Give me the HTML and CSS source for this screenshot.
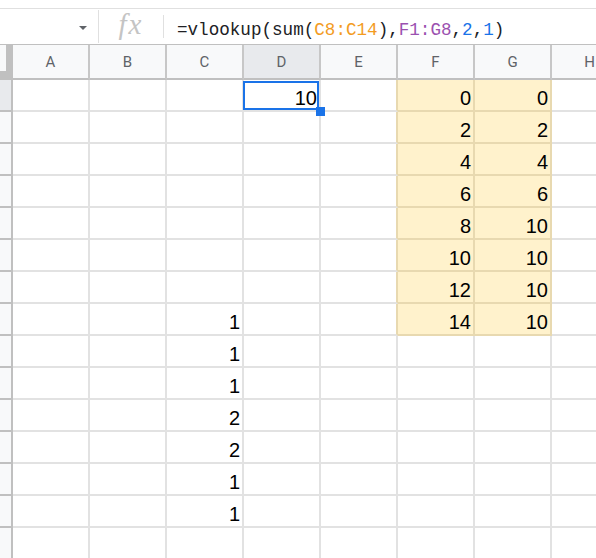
FILE: index.html
```html
<!DOCTYPE html>
<html lang="en">
  <head>
    <meta charset="UTF-8" />
    <meta name="viewport" content="width=device-width, initial-scale=1.0" />
    <title>Sheet</title>
    <link rel="stylesheet" href="styles.css">
  </head>
  <body>
    <div class="formula-bar">
      <div class="name-box"><span class="arrow"></span></div>
      <div class="sep"></div>
      <div class="fx">fx</div>
      <div class="sep short"></div>
      <div class="formula">=vlookup(sum(<span class="ref-a">C8:C14</span>),<span class="ref-b">F1:G8</span>,<span class="num">2</span>,<span class="num">1</span>)</div>
    </div>
    <div class="sheet" id="sheet"></div>
    <script>
      const cols = ["A", "B", "C", "D", "E", "F", "G", "H"];
      const data = { D1: 10, C8: 1, C9: 1, C10: 1, C11: 2, C12: 2, C13: 1, C14: 1 };
      const f = [0, 2, 4, 6, 8, 10, 12, 14];
      const g = [0, 2, 4, 6, 10, 10, 10, 10];
      f.forEach((v, i) => {
        data["F" + (i + 1)] = v;
        data["G" + (i + 1)] = g[i];
      });

      let html = `<div class="corner"></div>`;
      html += cols
        .map((c) => `<div class="col-head ${c == "D" ? "active" : ""}">${c}</div>`)
        .join("");
      for (let r = 1; r <= 15; r++) {
        html += `<div class="row-head ${r == 1 ? "active" : ""}"></div>`;
        html += cols
          .map((c) => {
            let cls = "cell";
            if (r <= 8 && (c == "F" || c == "G")) cls += " fill";
            if (r <= 8 && c == "E") cls += " edge";
            if (c == "D" && r == 1) cls += " selected";
            const v = data[c + r];
            return `<div class="${cls}">${v === undefined ? "" : v}</div>`;
          })
          .join("");
      }
      document.querySelector("#sheet").innerHTML = html;
    </script>
  </body>
</html>
```

FILE: styles.css
```css
* {
  box-sizing: border-box;
}
body {
  margin: 0;
  overflow: hidden;
  background: #fff;
  font-family: "Liberation Sans", Arial, sans-serif;
}
.formula-bar {
  margin-top: 8px;
  height: 36px;
  border-top: 1px solid #e0e0e0;
  display: flex;
  align-items: center;
}
.name-box {
  width: 98px;
  height: 100%;
  display: flex;
  align-items: center;
  justify-content: flex-end;
  padding-right: 11px;
}
.arrow {
  border-left: 4px solid transparent;
  border-right: 4px solid transparent;
  border-top: 4px solid #5f6368;
  margin-top: 2px;
}
.sep {
  width: 1px;
  height: 33px;
  background: #e0e0e0;
}
.sep.short {
  height: 23px;
}
.fx {
  width: 64px;
  text-align: center;
  font: italic 29px/28px "Liberation Serif", serif;
  color: #c4c4c4;
  letter-spacing: 2px;
  margin-bottom: 6px;
}
.formula {
  padding-left: 13px;
  margin-top: 6px;
  font: 17.6px/20px "Liberation Mono", monospace;
  color: #202124;
  white-space: nowrap;
}
.ref-a {
  color: #f39c1f;
}
.ref-b {
  color: #9b51b0;
}
.num {
  color: #1a73e8;
}
.sheet {
  display: grid;
  grid-template-columns: 13px repeat(8, 77px);
  grid-template-rows: 35px;
  grid-auto-rows: 32px;
  border-top: 1px solid #c0c0c0;
  overflow: hidden;
}
.corner {
  background: #f8f9fa;
  border-right: 7px solid #c0c0c0;
  border-bottom: 9px solid #c0c0c0;
}
.col-head {
  background: #f8f9fa;
  border-right: 2px solid #c7c7c7;
  border-bottom: 2px solid #c0c0c0;
  display: flex;
  align-items: center;
  justify-content: center;
  font: 15px Roboto, sans-serif;
  color: #5f6368;
}
.row-head {
  background: #f8f9fa;
  border-right: 2px solid #c0c0c0;
  border-bottom: 2px solid #c0c0c0;
}
.active {
  background: #e8eaed;
}
.cell {
  border-right: 2px solid #e2e2e2;
  border-bottom: 2px solid #e2e2e2;
  display: flex;
  justify-content: flex-end;
  align-items: flex-end;
  padding: 0 2px 2px 0;
  font-size: 20px;
  line-height: 20px;
  color: #000;
}
.fill {
  background: #fff2cc;
  border-color: #e8d9b0;
}
.edge {
  border-right-color: #e8d9b0;
}
.selected {
  position: relative;
}
.selected::before {
  content: "";
  position: absolute;
  left: -1px;
  top: 1px;
  right: 0;
  bottom: 0;
  border: 2px solid #1a73e8;
  z-index: 2;
}
.selected::after {
  content: "";
  position: absolute;
  left: 72px;
  top: 27px;
  width: 9px;
  height: 9px;
  background: #1a73e8;
  z-index: 3;
}
```
